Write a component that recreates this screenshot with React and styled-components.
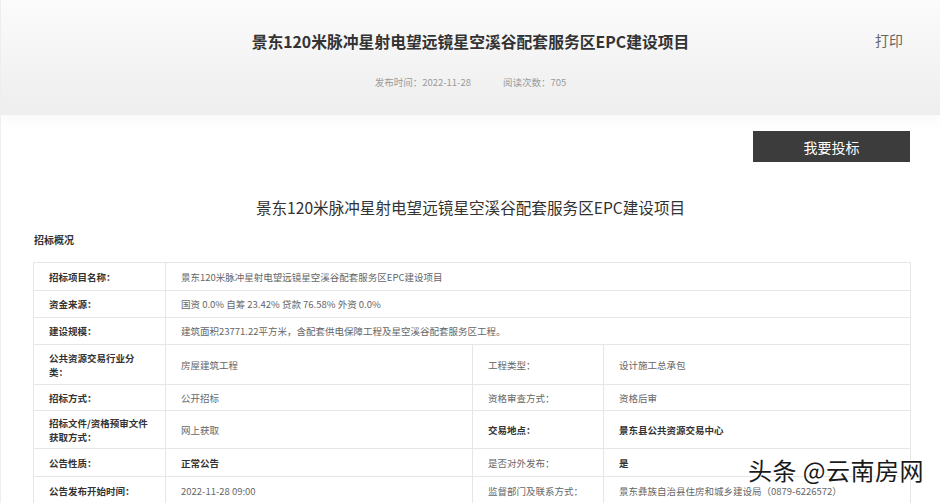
import React from "react";
import styled, { createGlobalStyle } from "styled-components";

const GlobalStyle = createGlobalStyle`
  html, body {
    margin: 0;
    padding: 0;
    background: #fff;
  }
  body {
    font-family: "Noto Sans CJK SC", "Microsoft YaHei", sans-serif;
    color: #333;
  }
`;

const Page = styled.div`
  position: relative;
  width: 940px;
  height: 503px;
  overflow: hidden;
  background: #fff;
  border-left: 1px solid #eee;
  box-sizing: border-box;
`;

const Header = styled.div`
  height: 115px;
  background: linear-gradient(to bottom, #fbfbfb 0%, #f3f3f3 60%, #eeeeee 100%);
  box-shadow: 0 6px 14px rgba(0, 0, 0, 0.03);
  display: grid;
  grid-template-columns: 1fr auto 1fr;
  grid-template-rows: 80px 35px;
`;

const HeadTitle = styled.h1`
  grid-column: 2;
  margin: 0;
  align-self: center;
  padding-top: 2px;
  font-size: 15.8px;
  font-weight: 700;
  color: #333;
`;

const PrintLink = styled.span`
  grid-column: 3;
  justify-self: end;
  align-self: center;
  padding-right: 37px;
  font-size: 14px;
  color: #666;
  cursor: pointer;
`;

const Meta = styled.div`
  grid-column: 1 / 4;
  grid-row: 2;
  display: flex;
  justify-content: center;
  gap: 32px;
  margin-top: -5px;
  font-size: 9.5px;
  color: #9a9a9a;
`;

const ActionRow = styled.div`
  display: flex;
  justify-content: flex-end;
  padding: 16px 30px 0 0;
`;

const BidButton = styled.button`
  width: 157px;
  height: 31px;
  border: none;
  background: #3c3c3c;
  color: #fff;
  font-family: inherit;
  font-size: 14px;
  cursor: pointer;
`;

const SubTitle = styled.h2`
  margin: 33px 0 0;
  text-align: center;
  font-size: 15.6px;
  font-weight: 400;
  color: #333;
  line-height: 24px;
`;

const SectionTitle = styled.h3`
  margin: 14px 0 0 33px;
  font-size: 10px;
  font-weight: 700;
  color: #333;
  line-height: 14px;
`;

const InfoTable = styled.table`
  margin: 15px 0 0 32px;
  width: 877px;
  border-collapse: collapse;
  table-layout: fixed;
  font-size: 9.5px;
  line-height: 14px;
`;

const Row = styled.tr`
  height: ${(p) => p.$h}px;
`;

const Cell = styled.td`
  border: 1px solid #e6e6e6;
  padding: 0 10px 0 15px;
  vertical-align: middle;
  color: ${(p) => (p.$label || p.$strong ? "#333" : "#666")};
  font-weight: ${(p) => (p.$label || p.$strong ? 700 : 400)};
`;

const Watermark = styled.div`
  position: absolute;
  right: 16px;
  bottom: 16px;
  font-size: 24px;
  font-weight: 400;
  color: #1a1a1a;
  letter-spacing: 0.5px;
  text-shadow: 0 0 2px #fff, 0 0 2px #fff, 1px 1px 0 #fff, -1px -1px 0 #fff;
`;

const TITLE = "景东120米脉冲星射电望远镜星空溪谷配套服务区EPC建设项目";

const rows = [
  { h: 28, cells: [{ label: ["招标项目名称："] }, { text: TITLE, span: 3 }] },
  { h: 27, cells: [{ label: ["资金来源："] }, { text: "国资 0.0% 自筹 23.42% 贷款 76.58% 外资 0.0%", span: 3 }] },
  { h: 27, cells: [{ label: ["建设规模："] }, { text: "建筑面积23771.22平方米，含配套供电保障工程及星空溪谷配套服务区工程。", span: 3 }] },
  {
    h: 40,
    cells: [
      { label: ["公共资源交易行业分", "类："] },
      { text: "房屋建筑工程" },
      { label: ["工程类型："], light: true },
      { text: "设计施工总承包" },
    ],
  },
  {
    h: 26,
    cells: [
      { label: ["招标方式："] },
      { text: "公开招标" },
      { label: ["资格审查方式："], light: true },
      { text: "资格后审" },
    ],
  },
  {
    h: 38,
    cells: [
      { label: ["招标文件/资格预审文件", "获取方式："] },
      { text: "网上获取" },
      { label: ["交易地点："] },
      { text: "景东县公共资源交易中心", strong: true },
    ],
  },
  {
    h: 28,
    cells: [
      { label: ["公告性质："] },
      { text: "正常公告", strong: true },
      { label: ["是否对外发布："], light: true },
      { text: "是", strong: true },
    ],
  },
  {
    h: 28,
    cells: [
      { label: ["公告发布开始时间："] },
      { text: "2022-11-28 09:00" },
      { label: ["监督部门及联系方式："], light: true },
      { text: "景东彝族自治县住房和城乡建设局（0879-6226572）" },
    ],
  },
];

function App() {
  return (
    <>
      <GlobalStyle />
      <Page>
        <Header>
          <HeadTitle>{TITLE}</HeadTitle>
          <PrintLink>打印</PrintLink>
          <Meta>
            <span>发布时间：2022-11-28</span>
            <span>阅读次数：705</span>
          </Meta>
        </Header>

        <ActionRow>
          <BidButton>我要投标</BidButton>
        </ActionRow>

        <SubTitle>{TITLE}</SubTitle>
        <SectionTitle>招标概况</SectionTitle>

        <InfoTable>
          <colgroup>
            <col style={{ width: 132 }} />
            <col style={{ width: 307 }} />
            <col style={{ width: 131 }} />
            <col style={{ width: 307 }} />
          </colgroup>
          <tbody>
            {rows.map((row, i) => (
              <Row key={i} $h={row.h}>
                {row.cells.map((c, j) =>
                  c.label ? (
                    <Cell key={j} $label={!c.light}>
                      {c.label.map((line, k) => (
                        <React.Fragment key={k}>
                          {k > 0 && <br />}
                          {line}
                        </React.Fragment>
                      ))}
                    </Cell>
                  ) : (
                    <Cell key={j} colSpan={c.span || 1} $strong={c.strong}>
                      {c.text}
                    </Cell>
                  )
                )}
              </Row>
            ))}
          </tbody>
        </InfoTable>

        <Watermark>头条 @云南房网</Watermark>
      </Page>
    </>
  );
}

export default App;
